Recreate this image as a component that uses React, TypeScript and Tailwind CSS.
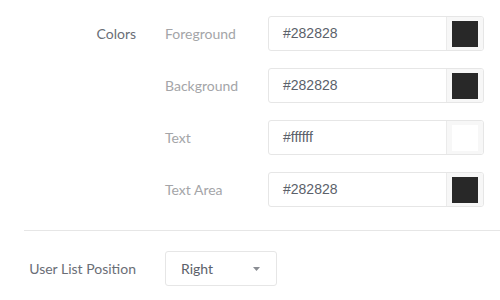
import React from "react";

const rows = [
  { label: "Foreground", value: "#282828", swatch: "bg-[#282828]" },
  { label: "Background", value: "#282828", swatch: "bg-[#282828]" },
  { label: "Text", value: "#ffffff", swatch: "bg-[#ffffff]" },
  { label: "Text Area", value: "#282828", swatch: "bg-[#282828]" },
];

export default function App() {
  return (
    <div className="w-[500px] h-[300px] bg-white overflow-hidden" style={{ fontFamily: "Lato, sans-serif" }}>
      <div className="flex pt-[16px]">
        <div className="w-[136px] shrink-0 text-right text-[14px] text-[#6a6e76] leading-[35px]">Colors</div>
        <div className="ml-[29px] flex flex-col gap-[17px]">
          {rows.map((r) => (
            <div key={r.label} className="flex items-center h-[35px]">
              <div className="w-[103px] text-[14px] text-[#a4a5a8]">{r.label}</div>
              <div className="w-[216px] h-[35px] flex border border-[#e6e6e6] rounded-[3px] overflow-hidden">
                <div
                  className="flex-1 flex items-center pl-[14px] text-[14px] text-[#5b616a]"
                  style={{ fontFamily: '"Liberation Sans", Arial, sans-serif' }}
                >
                  {r.value}
                </div>
                <div className="w-[37px] bg-[#f7f7f7] border-l border-[#ebebeb] flex items-center justify-center">
                  <div className={`w-[26px] h-[26px] ${r.swatch}`} />
                </div>
              </div>
            </div>
          ))}
        </div>
      </div>
      <div className="ml-[24px] mt-[23px] border-t border-[#e6e6e6]" />
      <div className="flex items-center mt-[20px]">
        <div className="w-[136px] shrink-0 text-right text-[14px] text-[#6a6e76]">User List Position</div>
        <div className="ml-[29px] w-[112px] h-[35px] border border-[#e6e6e6] rounded-[3px] flex items-center justify-between pl-[15px] pr-[16px]">
          <span className="text-[14px] text-[#5b616a]">Right</span>
          <svg width="7" height="4" viewBox="0 0 7 4">
            <path d="M0 0 L7 0 L3.5 4 Z" fill="#8a8d93" />
          </svg>
        </div>
      </div>
    </div>
  );
}
